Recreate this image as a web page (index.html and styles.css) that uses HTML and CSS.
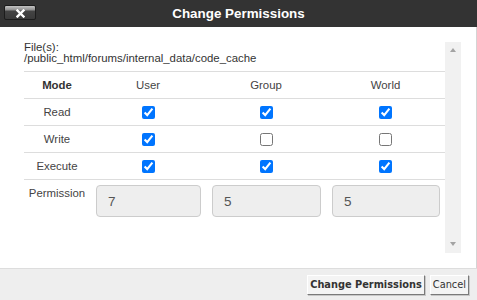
FILE: index.html
```html
<!DOCTYPE html>
<html lang="en">
<head>
    <meta charset="UTF-8">
    <meta name="viewport" content="width=device-width, initial-scale=1.0">
    <title>Change Permissions</title>
    <link rel="stylesheet" href="styles.css">
</head>
<body>
    <div class="dialog">
        <div class="titlebar">
            <button class="close-btn" title="Close">
                <svg width="9" height="9" viewBox="0 0 9 9">
                    <path d="M1.5 1.5 L7.5 7.5 M7.5 1.5 L1.5 7.5" stroke="#fff" stroke-width="2.4" stroke-linecap="square"/>
                </svg>
            </button>
            <h1>Change Permissions</h1>
        </div>

        <div class="dialog-body">
            <div class="scroll-box">
                <div class="scroll-content">
                    <div class="files">
                        File(s):<br>
                        /public_html/forums/internal_data/code_cache
                    </div>
                    <table class="perm-table">
                        <colgroup>
                            <col class="col-mode">
                            <col class="col-user">
                            <col class="col-group">
                            <col class="col-world">
                        </colgroup>
                        <tr>
                            <th>Mode</th>
                            <td>User</td>
                            <td>Group</td>
                            <td>World</td>
                        </tr>
                        <tr>
                            <td>Read</td>
                            <td><input type="checkbox" checked></td>
                            <td><input type="checkbox" checked></td>
                            <td><input type="checkbox" checked></td>
                        </tr>
                        <tr>
                            <td>Write</td>
                            <td><input type="checkbox" checked></td>
                            <td><input type="checkbox"></td>
                            <td><input type="checkbox"></td>
                        </tr>
                        <tr>
                            <td>Execute</td>
                            <td><input type="checkbox" checked></td>
                            <td><input type="checkbox" checked></td>
                            <td><input type="checkbox" checked></td>
                        </tr>
                        <tr class="perm-row">
                            <td>Permission</td>
                            <td><input type="text" class="perm-input" value="7" readonly></td>
                            <td><input type="text" class="perm-input" value="5" readonly></td>
                            <td><input type="text" class="perm-input" value="5" readonly></td>
                        </tr>
                    </table>
                </div>
                <!-- scrollbar track (empty, nothing to scroll) -->
                <div class="scroll-track">
                    <span class="arrow-up"></span>
                    <span class="arrow-down"></span>
                </div>
            </div>
        </div>

        <div class="footer">
            <button class="btn btn-bold">Change Permissions</button>
            <button class="btn">Cancel</button>
        </div>
    </div>
</body>
</html>
```

FILE: styles.css
```css
/* Change Permissions dialog */
body {
    margin: 0;
    padding: 0;
    font-family: "Liberation Sans", Arial, sans-serif;
    background: #fff;
    color: #333;
}

.dialog {
    width: 477px;
    height: 300px;
    display: flex;
    flex-direction: column;
}

/* Title bar */
.titlebar {
    height: 27px;
    background: #333;
    display: grid;
    grid-template-columns: 1fr auto 1fr;
    align-items: center;
}

.titlebar h1 {
    margin: 0;
    color: #fff;
    font-size: 13.4px;
    font-weight: bold;
}

.close-btn {
    justify-self: start;
    margin: 0 0 3px 4px;
    width: 32px;
    height: 15px;
    padding: 0;
    border: 1px solid #1c1c1c;
    border-radius: 2px;
    background: linear-gradient(to bottom, #c4c4c4 0, #8f8f8f 4px, #444 5px, #3a3a3a 100%);
    display: flex;
    align-items: center;
    justify-content: center;
    cursor: pointer;
}

.close-btn svg {
    display: block;
    margin-top: 2px;
}

/* Body */
.dialog-body {
    flex: 1;
    padding: 15px 15px 15px 16px;
    border-right: 1px solid #d4d4d4;
    box-sizing: border-box;
}

.scroll-box {
    height: 211px;
    display: flex;
}

.scroll-content {
    flex: 1;
    padding-left: 8px;
}

.scroll-track {
    width: 16px;
    background: #f1f1f1;
    display: flex;
    flex-direction: column;
    justify-content: space-between;
    align-items: center;
    padding: 6px 0 7px;
    box-sizing: border-box;
}

.arrow-up,
.arrow-down {
    width: 0;
    height: 0;
    border-left: 3.5px solid transparent;
    border-right: 3.5px solid transparent;
}

.arrow-up {
    border-bottom: 4px solid #a3a3a3;
}

.arrow-down {
    border-top: 4px solid #a3a3a3;
}

.files {
    font-size: 11.4px;
    line-height: 11px;
    margin-bottom: 7px;
}

.perm-table {
    width: 421px;
    table-layout: fixed;
    border-collapse: collapse;
    border-top: 1px solid #ddd;
    font-size: 11.4px;
    color: #444;
}

.col-mode { width: 66px; }
.col-user { width: 116px; }
.col-group { width: 120px; }
.col-world { width: 119px; }

.perm-table th,
.perm-table td {
    height: 26px;
    padding: 0;
    text-align: center;
    vertical-align: middle;
    border-bottom: 1px solid #ddd;
}

.perm-table th {
    font-weight: bold;
    color: #333;
}

.perm-table input[type="checkbox"] {
    margin: 0;
    width: 13px;
    height: 13px;
    vertical-align: middle;
}

.perm-row td {
    border-bottom: none;
    padding: 5px 5px 0 6px;
    vertical-align: top;
}

.perm-row td:first-child {
    padding: 7px 0 0 0;
    color: #444;
}

.perm-input {
    width: 100%;
    height: 32px;
    box-sizing: border-box;
    margin: 0;
    padding: 0 11px;
    border: 1px solid #ccc;
    border-radius: 4px;
    background: #eee;
    color: #555;
    font-family: "Liberation Sans", Arial, sans-serif;
    font-size: 13.5px;
}

/* Footer */
.footer {
    height: 32px;
    box-sizing: border-box;
    background: #eee;
    border-top: 1px solid #ddd;
    display: flex;
    justify-content: flex-end;
    align-items: center;
    gap: 5px;
    padding: 0 8px 0 0;
}

.btn {
    height: 20px;
    padding: 0 2px;
    font-family: "DejaVu Sans", Verdana, sans-serif;
    font-size: 9.8px;
    color: #333;
    background: #f4f4f4;
    border: 1px solid;
    border-color: #fff #7a7a7a #7a7a7a #fff;
    box-shadow: 1px 1px 0 #c8c8c8;
    cursor: pointer;
}

.btn-bold {
    font-weight: bold;
}
```
